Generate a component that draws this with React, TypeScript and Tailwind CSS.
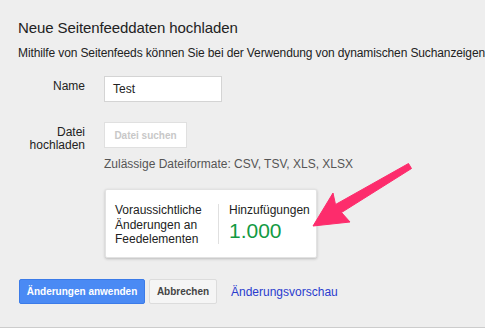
import React from "react";

export default function App() {
  return (
    <div
      className="relative w-[485px] h-[328px] overflow-hidden bg-[#eeeeee] border-b border-[#cccccc] text-[#222]"
      style={{ fontFamily: '"Liberation Sans", Arial, sans-serif' }}
    >
      <div className="pl-[18px] pt-[18px]">
        <div className="text-[15px] leading-[20px] text-[#222] tracking-[-0.1px]">Neue Seitenfeeddaten hochladen</div>
        <div className="mt-[7px] text-[12px] leading-[16px] whitespace-nowrap text-[#222] tracking-[-0.12px]">
          Mithilfe von Seitenfeeds können Sie bei der Verwendung von dynamischen Suchanzeigen
        </div>

        <div className="mt-[15px] flex gap-[19px]">
          <div className="w-[67px] pt-[2px] text-right text-[12px] leading-[16px]">Name</div>
          <div className="w-[118px] h-[26px] bg-white border border-[#d4d4d4] px-[8px] text-[12px] leading-[24px] text-[#222]">
            Test
          </div>
        </div>

        <div className="mt-[20px] flex gap-[19px]">
          <div className="w-[67px] pt-[4px] text-right text-[12px] leading-[13px]">
            Datei
            <br />
            hochladen
          </div>
          <div>
            <div className="w-[83px] h-[26px] bg-white border border-[#e0e0e0] flex items-center justify-center text-[10px] font-bold text-[#c8c8c8]">
              Datei suchen
            </div>
            <div className="mt-[8px] text-[12px] leading-[16px] text-[#555] whitespace-nowrap">
              Zulässige Dateiformate: CSV, TSV, XLS, XLSX
            </div>
            <div className="mt-[17px] ml-[1px] w-[212px] h-[69px] bg-white rounded-[2px] border border-[#e2e2e2] shadow-[0_1px_3px_rgba(0,0,0,0.22)] flex pt-[13px] pl-[9px]">
              <div className="w-[103px] text-[12px] leading-[14.5px] text-[#222]">
                Voraussichtliche
                <br />
                Änderungen an
                <br />
                Feedelementen
              </div>
              <div className="w-px h-[40px] mt-[1px] bg-[#e0e0e0]"></div>
              <div className="pl-[10px]">
                <div className="text-[12px] leading-[14.5px] text-[#222]">Hinzufügungen</div>
                <div className="mt-[1px] text-[21px] leading-[24px] text-[#139a43]">1.000</div>
              </div>
            </div>
          </div>
        </div>

        <div className="mt-[21px] flex items-center">
          <div className="ml-[1px] w-[126px] h-[25px] bg-[#4a8af4] border border-[#3b7be8] rounded-[2px] flex items-center justify-center text-[10px] font-bold text-white">
            Änderungen anwenden
          </div>
          <div className="ml-[4px] w-[68px] h-[25px] bg-[#f5f5f5] border border-[#dcdcdc] rounded-[2px] flex items-center justify-center text-[10px] font-bold text-[#444]">
            Abbrechen
          </div>
          <div className="ml-[14px] text-[12px] text-[#2a3bce]">Änderungsvorschau</div>
        </div>
      </div>

      <svg className="absolute left-0 top-0" width="485" height="328" viewBox="0 0 485 328">
        <path
          d="M313 226 L333 193 L335.5 204.5 L408.5 163.5 L411.5 168.5 L341.5 212.5 L350 222 Z"
          fill="#fd2c6c"
          stroke="#fd2c6c"
          strokeWidth="1"
          strokeLinejoin="round"
        />
      </svg>
    </div>
  );
}
